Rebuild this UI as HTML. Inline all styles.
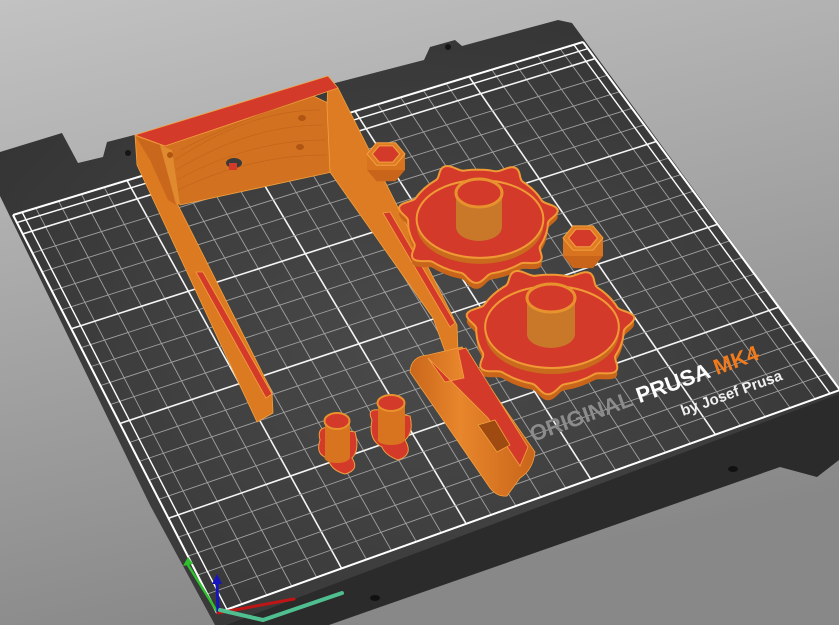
<!DOCTYPE html>
<html><head><meta charset="utf-8"><style>
html,body{margin:0;padding:0;width:839px;height:625px;overflow:hidden;background:#a8a8a8}
svg{display:block}
</style></head><body>
<svg id="s" width="839" height="625" viewBox="0 0 839 625" xmlns="http://www.w3.org/2000/svg">
<defs>
<linearGradient id="bg" x1="0" y1="0" x2="0.3" y2="1"><stop offset="0" stop-color="#c2c2c2"/><stop offset="1" stop-color="#888"/></linearGradient>
<radialGradient id="bed" cx="0.5" cy="0.55" r="0.6"><stop offset="0" stop-color="#4a4a4a"/><stop offset="1" stop-color="#353535"/></radialGradient>
<linearGradient id="cyl" x1="0" y1="0" x2="1" y2="0"><stop offset="0" stop-color="#c9661b"/><stop offset="0.4" stop-color="#e8862c"/><stop offset="1" stop-color="#c8651a"/></linearGradient>
</defs>
<rect width="839" height="625" fill="url(#bg)"/>
<polygon points="225,625 839,392 839,460 817,477 780,467 329,625" fill="#2b2b2b"/>
<ellipse cx="733" cy="469" rx="5" ry="3" fill="#111"/>
<ellipse cx="375" cy="598" rx="5" ry="3" fill="#111"/>
<polygon points="0,152 62,133 78,163 103,157 107,142 424,60 430,47 455,40 462,46 558,20 572,23 839,388 839,394 225,625 215,625 150,505 0,196" fill="url(#bed)"/>
<circle cx="128" cy="153" r="3" fill="#151515"/>
<circle cx="448" cy="47" r="3" fill="#151515"/>
<g id="grid"></g>
<g transform="rotate(-20 533 442)" font-family="Liberation Sans, sans-serif" font-weight="bold">
<text x="533" y="442" font-size="22" fill="#8c8c8c">ORIGINAL <tspan fill="#ffffff">PRUSA</tspan> <tspan fill="#f07a1c">MK4</tspan></text>
</g>
<g transform="rotate(-20 683 416)" font-family="Liberation Sans, sans-serif" font-weight="bold">
<text x="683" y="416" font-size="15" fill="#f0f0f0">by Josef Prusa</text>
</g>
<g stroke="#f2a040" stroke-width="0.8" stroke-linejoin="round">
<polygon points="160,145 305,92 330,104 332,172 180,205 172,180" fill="#d2711f"/>
<polygon points="135,135 162,143 178,205 272,392 273,413 257,422 137,165" fill="#dc7a22"/>
<polygon points="136,137 160,145 176,205 168,200 150,160" fill="#c9681c" stroke="none"/>
<polygon points="196,272 203,272 272,394 266,398" fill="#d43a2a"/>
<polygon points="328,76 338,88 457,325 458,352 447,357 433,318 330,172 327,106" fill="#de7c24"/>
<polygon points="383,213 390,212 455,323 450,327" fill="#d43a2a"/>
<polygon points="135,135 328,76 338,88 165,146" fill="#d43a2a"/>
<polygon points="160,145 172,150 180,205 176,203" fill="#e08a30" stroke="none"/>
</g>
<g fill="none" stroke="#b85d18" stroke-width="0.7" opacity="0.6">
<path d="M175,160 Q250,110 320,110"/><path d="M176,170 Q250,125 323,125"/><path d="M177,180 Q250,140 325,140"/><path d="M178,190 Q250,155 327,155"/>
<path d="M180,150 Q240,120 300,100"/>
</g>
<ellipse cx="234" cy="163" rx="8" ry="5" fill="#3a3a3a"/>
<rect x="229" y="163" width="8" height="7" fill="#d43a2a"/>
<ellipse cx="302" cy="118" rx="4" ry="3" fill="#b05512"/>
<ellipse cx="300" cy="147" rx="4" ry="3" fill="#b05512"/>
<ellipse cx="170" cy="155" rx="3" ry="3" fill="#b05512"/>
<g id="parts"></g>
<g stroke="#f2a040" stroke-width="0.8">
<path d="M410,372 Q411,356 428,355 L462,347 L535,452 Q533,470 520,478 L507,496 Q497,497 490,488 Z" fill="url(#cyl)"/>
<polygon points="428,358 445,382 464,378 458,350 466,348 528,447 520,466 488,418" fill="#d43a2a"/>
<polygon points="478,425 495,420 510,445 497,452" fill="#9e4a10"/>
</g>
<g stroke="#f2a040" stroke-width="1">
<path d="M320,440 Q316,425 332,428 L355,432 Q360,450 352,458 Q360,470 345,474 Q330,470 328,458 Q315,455 320,440 Z" fill="#d43a2a"/>
<rect x="325" y="420" width="25" height="38" fill="#d8741f" stroke="none"/>
<ellipse cx="337" cy="458" rx="12.5" ry="5" fill="#d8741f" stroke="none"/>
<ellipse cx="337" cy="421" rx="12.5" ry="8" fill="#d43a2a" stroke="#e8922e" stroke-width="2"/>
<path d="M372,420 Q366,408 380,410 L410,416 Q414,432 405,440 Q414,455 398,460 Q385,455 382,447 Q368,440 372,420 Z" fill="#d43a2a"/>
<rect x="378" y="402" width="27" height="38" fill="#d8741f" stroke="none"/>
<ellipse cx="391" cy="440" rx="13.5" ry="5" fill="#d8741f" stroke="none"/>
<ellipse cx="391" cy="403" rx="13.5" ry="8" fill="#d43a2a" stroke="#e8922e" stroke-width="2"/>
</g>
<g stroke-linecap="round">
<line x1="218" y1="613" x2="188" y2="565" stroke="#2ec02e" stroke-width="2.5"/>
<polygon points="183,566 188,557 193,564" fill="#2ec02e"/>
<line x1="218" y1="613" x2="217" y2="582" stroke="#1515c0" stroke-width="3"/>
<polygon points="212,584 217,574 222,584" fill="#1515c0"/>
<line x1="218" y1="613" x2="294" y2="599" stroke="#c01515" stroke-width="3"/>
<polyline points="220,610 263,620 342,593" fill="none" stroke="#4fbf8f" stroke-width="4"/>
</g>
</svg>
<script>
(function(){
var NS="http://www.w3.org/2000/svg";
function el(t,a,p){var e=document.createElementNS(NS,t);for(var k in a)e.setAttribute(k,a[k]);(p||document.getElementById('parts')).appendChild(e);return e;}
var TL=[13,215],TR=[583,42],BR=[840,390],BL=[217,613];
function P(u,v){var tx=TL[0]+(TR[0]-TL[0])*u,ty=TL[1]+(TR[1]-TL[1])*u,bx=BL[0]+(BR[0]-BL[0])*u,by=BL[1]+(BR[1]-BL[1])*u;return [tx+(bx-tx)*v,ty+(by-ty)*v];}
var g=document.getElementById('grid');
var NU=25,NV=21;
function ln(a,b,c,w){el('line',{x1:a[0],y1:a[1],x2:b[0],y2:b[1],stroke:c,'stroke-width':w},g);}
for(var i=0;i<=NU;i++){var u=i/NU;var maj=(i%5==0);ln(P(u,0),P(u,1),maj?'#f4f4f4':'#a0a0a0',maj?1.6:0.9);}
for(var j=0;j<=NV;j++){var v=j/NV;var maj=((NV-j)%5==0);ln(P(0,v),P(1,v),maj?'#f4f4f4':'#a0a0a0',maj?1.6:0.9);}
ln(P(0,0),P(1,0),'#fff',2);ln(P(0,0),P(0,1),'#fff',2);ln(P(1,0),P(1,1),'#fff',2);ln(P(0,1),P(1,1),'#fff',2);
ln(P(0,0.4/NV),P(1,0.4/NV),'#fff',1.4);ln(P(1-0.4/NU,0),P(1-0.4/NU,1),'#fff',1.4);
ln(P(0.4/NU,0),P(0.4/NU,1),'#fff',1.4);
function star(cx,cy,rx,ry,amp,n,rot){var d='';for(var k=0;k<=180;k++){var t=k/180*Math.PI*2;var c=Math.cos(n*(t+rot));var r=1+amp*Math.max(0,c)*Math.max(0,c)*1.6-amp*0.3;var x=cx+rx*r*Math.cos(t),y=cy+ry*r*Math.sin(t);d+=(k?'L':'M')+x.toFixed(1)+','+y.toFixed(1);}return d+'Z';}
function knob(cx,cy,rx,ry,hx,hy,hrx,hry,hb){
el('path',{d:star(cx,cy+6,rx,ry,0.1,7,0.2),fill:'#c8651a'});
el('path',{d:star(cx,cy,rx,ry,0.1,7,0.2),fill:'#d43a2a',stroke:'#f09a36','stroke-width':2});
el('ellipse',{cx:cx+2,cy:cy+3,rx:rx*0.88,ry:ry*0.72,fill:'#c96a1c'});
el('ellipse',{cx:cx+2,cy:cy-3,rx:rx*0.88,ry:ry*0.72,fill:'#d43a2a',stroke:'#f09a36','stroke-width':2});
el('rect',{x:hx-hrx,y:hy,width:hrx*2,height:hb-hy,fill:'#c9782a'});
el('ellipse',{cx:hx,cy:hb,rx:hrx,ry:hry,fill:'#c9782a'});
el('ellipse',{cx:hx,cy:hy,rx:hrx,ry:hry,fill:'#d43a2a',stroke:'#e8922e','stroke-width':3});
}
function hex(cx,cy,r,ry,h){var pts=[];for(var k=0;k<6;k++){var a=k*Math.PI/3;pts.push([cx+r*Math.cos(a),cy+ry*Math.sin(a)]);}
var s=pts.map(function(p){return p[0].toFixed(1)+','+p[1].toFixed(1)}).join(' ');
var sb=pts.map(function(p){return p[0].toFixed(1)+','+(p[1]+h).toFixed(1)}).join(' ');
el('polygon',{points:sb,fill:'#c8651a'});
el('polygon',{points:(cx+r)+','+cy+' '+(cx+r)+','+(cy+h)+' '+(cx-r)+','+(cy+h)+' '+(cx-r)+','+cy,fill:'#d8741f'});
el('polygon',{points:s,fill:'#e07d24',stroke:'#f2a040','stroke-width':1});
var pi=[];for(var k=0;k<6;k++){var a=k*Math.PI/3;pi.push((cx+r*0.72*Math.cos(a)).toFixed(1)+','+(cy+ry*0.72*Math.sin(a)).toFixed(1));}
el('polygon',{points:pi.join(' '),fill:'#d43a2a',stroke:'#f2a040','stroke-width':1});
}
hex(386,154,19,13,16);
knob(478,222,72,54,479,193,23,14,227);
hex(583,238,20,14,18);
knob(550,330,76,57,551,298,24,14,334);
})();
</script>
</body></html>
